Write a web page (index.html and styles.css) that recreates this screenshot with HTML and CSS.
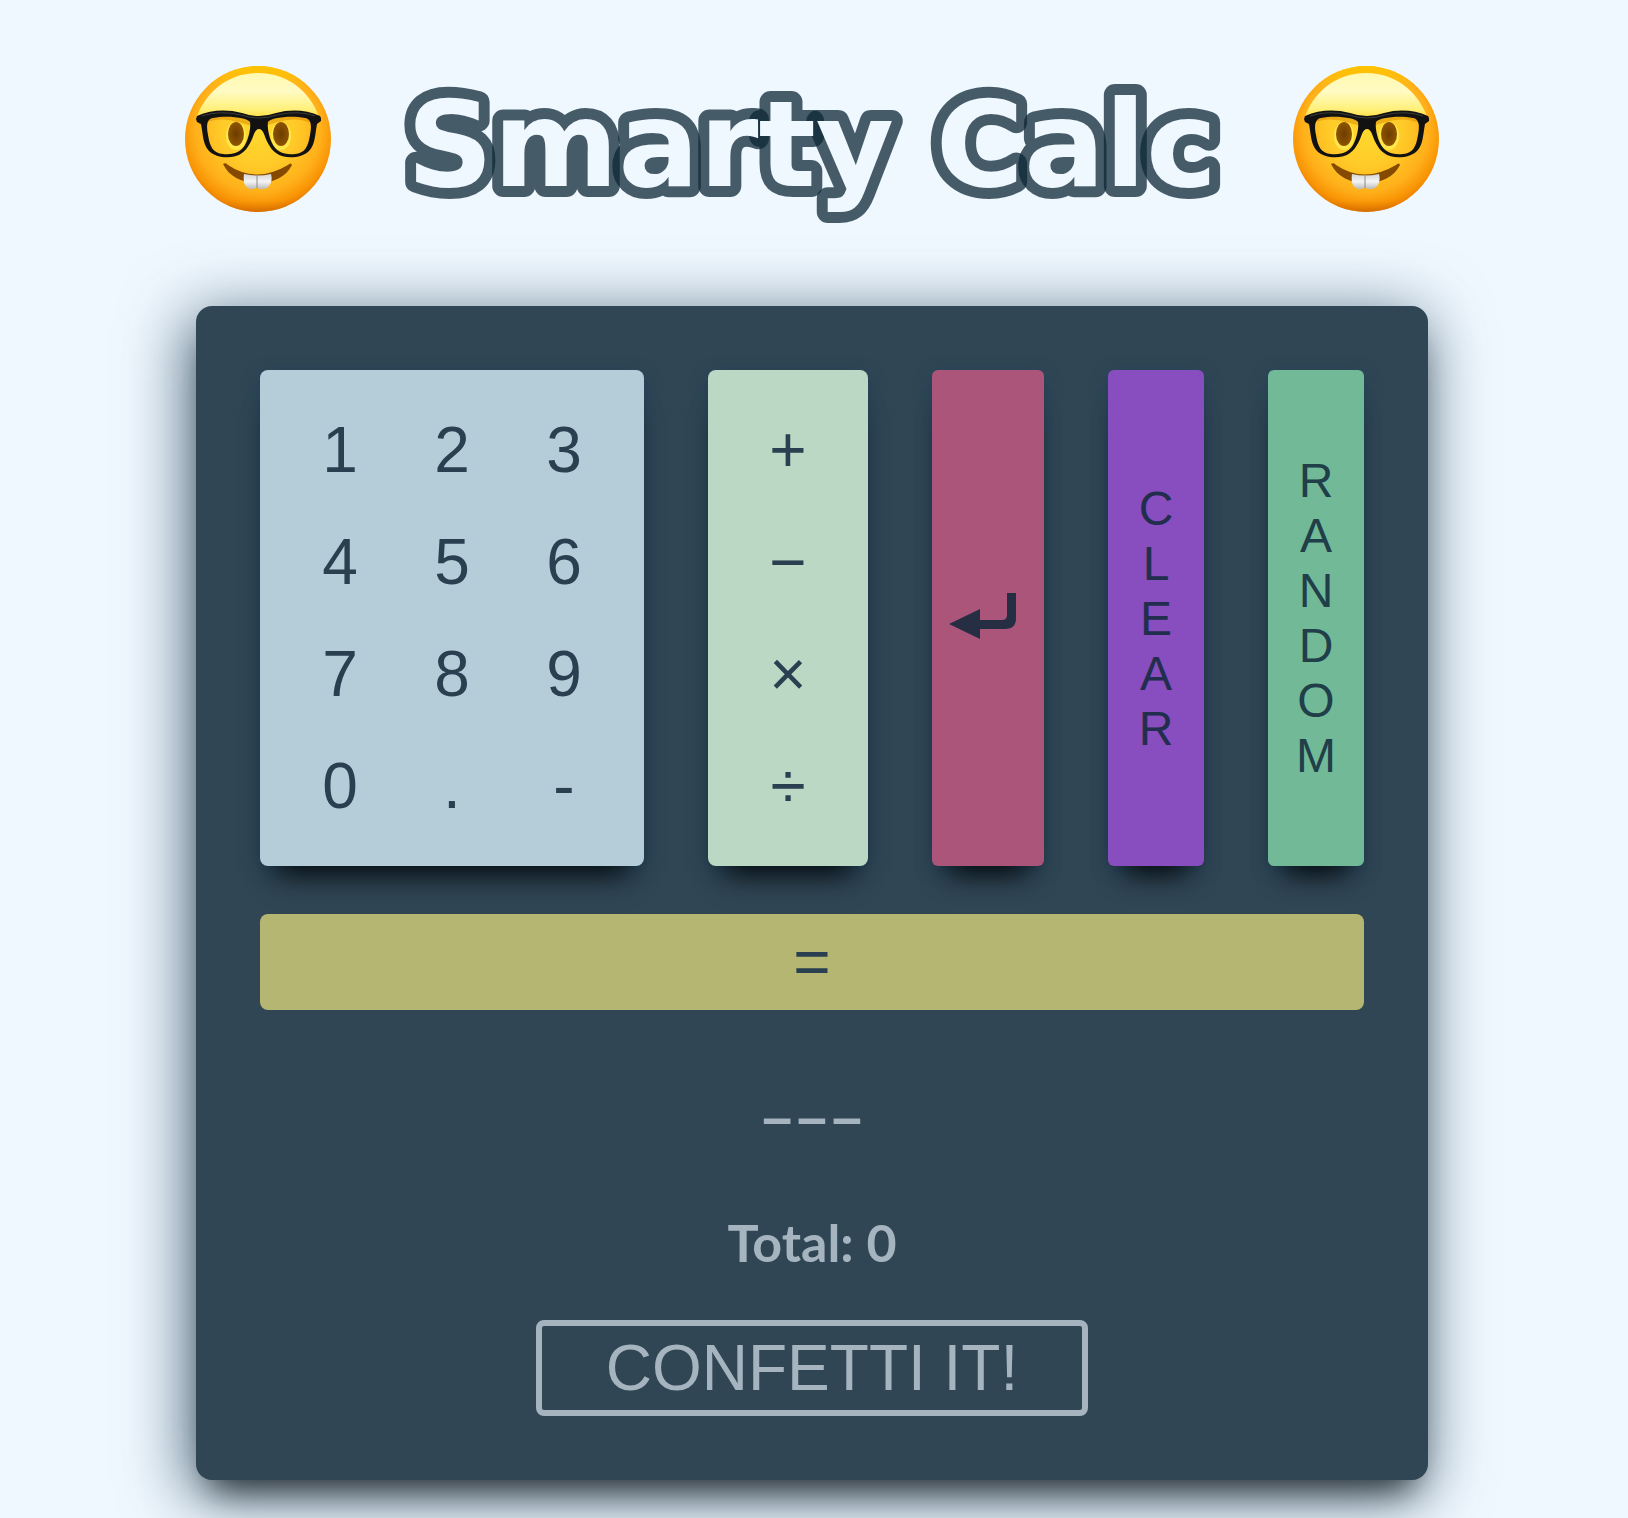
FILE: index.html
```html
<!DOCTYPE html>
<html lang="en">
<head>
<meta charset="utf-8">
<meta name="viewport" content="width=device-width, initial-scale=1">
<title>Smarty Calc</title>
<link rel="stylesheet" href="styles.css">
</head>
<body>
<svg class="defs" width="0" height="0" aria-hidden="true">
  <defs>
    <radialGradient id="face" cx="80" cy="70" r="84" gradientUnits="userSpaceOnUse">
      <stop offset="0" stop-color="#ffda2e"/>
      <stop offset=".45" stop-color="#ffca28"/>
      <stop offset=".75" stop-color="#ffb01a"/>
      <stop offset=".9" stop-color="#f99505"/>
      <stop offset="1" stop-color="#e67a00"/>
    </radialGradient>
    <linearGradient id="rim" x1="0" y1="0" x2="0" y2="1">
      <stop offset="0" stop-color="#ffc400"/>
      <stop offset=".15" stop-color="#ffc400" stop-opacity="0"/>
      <stop offset=".92" stop-color="#d87000" stop-opacity="0"/>
      <stop offset="1" stop-color="#c86400" stop-opacity=".6"/>
    </linearGradient>
    <linearGradient id="shine" x1="0" y1="14" x2="0" y2="66" gradientUnits="userSpaceOnUse">
      <stop offset="0" stop-color="#fff9b0"/>
      <stop offset=".35" stop-color="#fffbc4"/>
      <stop offset=".7" stop-color="#fff07a"/>
      <stop offset="1" stop-color="#ffe03a" stop-opacity=".4"/>
    </linearGradient>
    <radialGradient id="eye">
      <stop offset="0" stop-color="#6d3d00"/>
      <stop offset="1" stop-color="#8e5500"/>
    </radialGradient>
    <linearGradient id="tooth" x1="0" y1="0" x2="0" y2="1">
      <stop offset="0" stop-color="#d6d6d6"/>
      <stop offset=".5" stop-color="#f4f4f4"/>
      <stop offset="1" stop-color="#b9b9b9"/>
    </linearGradient>
    <symbol id="nerd" viewBox="0 0 160 160">
      <circle cx="80" cy="80" r="73" fill="url(#face)"/>
      <circle cx="80" cy="80" r="73" fill="url(#rim)"/>
      <path d="M80 14C49 14 27 34 18 60C34 53 59 55 80 62C101 55 126 53 142 60C133 34 111 14 80 14Z" fill="url(#shine)"/>
      <path d="M21 64Q40 54 62 61Q80 68 98 61Q120 54 139 64" fill="none" stroke="#d98a00" stroke-opacity=".5" stroke-width="5"/>
      <ellipse cx="58" cy="77" rx="10" ry="14" fill="#ffe84a"/>
      <ellipse cx="103" cy="77" rx="10" ry="14" fill="#ffe84a"/>
      <ellipse cx="58" cy="75" rx="8" ry="12" fill="url(#eye)"/>
      <ellipse cx="103" cy="75" rx="8" ry="12" fill="url(#eye)"/>
      <path d="M19 57Q40 48 64 54Q81 60 98 54Q121 48 142 57L143 59V62L139 65C137 76 137 86 131 92C124 99 107 101 98 94C91 89 88 80 86 75Q84 70 81 70Q78 70 76 75C74 80 71 89 64 94C55 101 38 99 31 92C25 86 25 76 23 65L19 63L18 60Z
        M35 59C29 60 28 66 30 76C32 88 35 94 45 95C56 96 64 93 68 84C71 78 73 68 72 63C70 59 50 56 35 59Z
        M127 59C133 60 134 66 132 76C130 88 127 94 117 95C106 96 98 93 94 84C91 78 89 68 90 63C92 59 112 56 127 59Z" fill="#121212" fill-rule="evenodd"/>
      <path d="M24 57Q42 51 63 56Q81 62 99 56Q120 51 137 57" fill="none" stroke="#3c3c3c" stroke-width="1"/>
      <path d="M45 105Q48 103 50 106Q78 125 110 106Q113 103 114 106C108 118 95 124 80 124C65 124 51 118 45 105Z" fill="#854a00"/>
      <path d="M66 115Q79 118 93 115C95 122 92 129 86 130Q81 131 79 128Q76 131 72 130C66 128 65 122 66 115Z" fill="url(#tooth)"/>
      <path d="M79 117V129" stroke="#8b8b8b" stroke-width="1"/>
    </symbol>
  </defs>
</svg>
<main class="page">
  <header class="header">
    <svg class="emoji" role="img" aria-label="Nerd face"><use href="#nerd"/></svg>
    <h1 class="title">
      <svg class="title-art" viewBox="0 0 860 160"><text class="title-text" x="430" y="127" text-anchor="middle">Smarty Calc</text></svg>
    </h1>
    <svg class="emoji" role="img" aria-label="Nerd face"><use href="#nerd"/></svg>
  </header>
  <section class="calculator">
    <div class="pads">
      <div class="pad numbers">
        <button class="key">1</button><button class="key">2</button><button class="key">3</button>
        <button class="key">4</button><button class="key">5</button><button class="key">6</button>
        <button class="key">7</button><button class="key">8</button><button class="key">9</button>
        <button class="key">0</button><button class="key">.</button><button class="key">-</button>
      </div>
      <div class="pad operators">
        <button class="key">+</button>
        <button class="key">−</button>
        <button class="key">×</button>
        <button class="key">÷</button>
      </div>
      <button class="pad enter" aria-label="Enter">
        <svg class="enter-icon" viewBox="0 0 67 47" aria-hidden="true"><path d="M58 0H67V25Q67 36 56 36H31V46L0 31L31 16V27H53Q58 27 58 22Z" fill="currentColor"/></svg>
      </button>
      <button class="pad tall clear" aria-label="Clear">C<br>L<br>E<br>A<br>R</button>
      <button class="pad tall random" aria-label="Random">R<br>A<br>N<br>D<br>O<br>M</button>
    </div>
    <button class="equals">=</button>
    <p class="entry">−−−</p>
    <p class="total">Total: 0</p>
    <button class="confetti">CONFETTI IT!</button>
  </section>
</main>
</body>
</html>
```
FILE: styles.css
```css
* {
  box-sizing: border-box;
}

body {
  margin: 0;
  background: #f0f8ff;
  color: #2a4050;
  font-family: "Liberation Sans", Arial, sans-serif;
}

button {
  padding: 0;
  border: 0;
  background: none;
  color: inherit;
  font: inherit;
  cursor: pointer;
}

.defs {
  position: absolute;
}

.page {
  display: flex;
  flex-direction: column;
  align-items: center;
  gap: 87px;
  padding: 59px 4px 38px 0;
}

.header {
  display: flex;
  align-items: center;
  justify-content: space-between;
  width: 100%;
  max-width: 1268px;
}

.emoji {
  flex: none;
  width: 160px;
  height: 160px;
}

.title {
  flex: 0 1 860px;
  margin: 0;
}

.title-art {
  display: block;
  width: 100%;
  overflow: visible;
}

.title-text {
  fill: #f0f8ff;
  stroke: rgba(13, 39, 53, 0.75);
  stroke-width: 22px;
  stroke-linejoin: round;
  paint-order: stroke fill;
  font-family: "DejaVu Sans", sans-serif;
  font-size: 120px;
  font-weight: 700;
  font-kerning: none;
}

.calculator {
  display: flex;
  flex-direction: column;
  align-items: center;
  width: 100%;
  max-width: 1232px;
  padding: 64px;
  border-radius: 16px;
  background: #304655;
  box-shadow: 0 24px 32px -16px rgba(0, 0, 0, 0.7), -6px 12px 64px 4px rgba(13, 49, 73, 0.65);
}

.pads {
  display: flex;
  justify-content: space-between;
  width: 100%;
}

.pad {
  border-radius: 8px;
  box-shadow: 0 24px 28px -16px rgba(0, 0, 0, 0.9), 0 4px 16px rgba(30, 64, 88, 0.8);
}

.numbers {
  display: grid;
  grid-template-columns: repeat(3, 112px);
  padding: 24px;
  background: #b5cdd9;
}

.operators {
  display: grid;
  padding: 24px;
  background: #bbd8c5;
}

.key {
  width: 112px;
  height: 112px;
  font-size: 64px;
}

.enter {
  width: 112px;
  padding-right: 12px;
  border-radius: 6px;
  background: #ab557a;
  color: #252e42;
}

.enter-icon {
  display: inline-block;
  width: 67px;
  height: 47px;
}

.tall {
  width: 96px;
  border-radius: 6px;
  font-size: 48px;
  line-height: 55px;
}

.clear {
  background: #884dbf;
  color: #222e4d;
}

.random {
  background: #72b998;
  color: #203f49;
}

.equals {
  width: 100%;
  height: 96px;
  margin-top: 48px;
  border-radius: 8px;
  background: #b5b671;
  font-size: 64px;
}

.entry,
.total {
  margin: 0;
  color: #a6b4c0;
  font-family: Lato, sans-serif;
  font-weight: 700;
}

.entry {
  margin-top: 60px;
  font-size: 60px;
  line-height: 96px;
}

.total {
  margin-top: 40px;
  font-size: 52px;
  line-height: 72px;
}

.confetti {
  height: 96px;
  margin-top: 42px;
  padding: 0 64px;
  border: 6px solid #a6b4c0;
  border-radius: 8px;
  color: #a6b4c0;
  font-size: 64px;
}
```
